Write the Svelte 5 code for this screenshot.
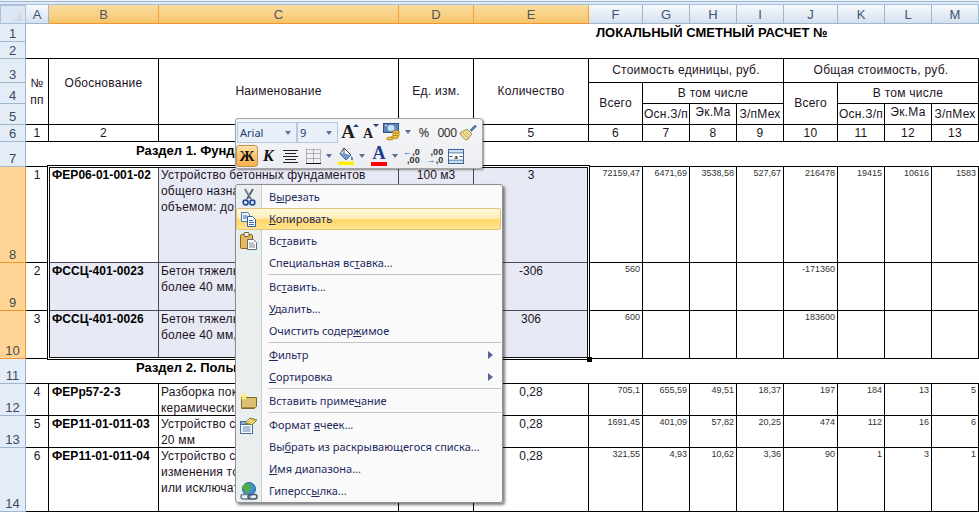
<script>
	const colW = [26, 23, 110, 240, 75, 115, 54, 47, 47, 47, 54, 47, 47, 47];
	const rowH = [5, 19, 18, 17, 24, 21, 21, 17, 25, 96, 48, 48, 25, 32, 32, 64];
	const letters = ['A', 'B', 'C', 'D', 'E', 'F', 'G', 'H', 'I', 'J', 'K', 'L', 'M'];

	// строки листа -> строка грида: лист 1 = грид 3
	const gr = (n) => n + 2;

	const head = [
		{ c: 2, r: 3, rs: 3, t: '№\nпп', k: 'mid' },
		{ c: 3, r: 3, rs: 3, t: 'Обоснование', k: 'mid up16' },
		{ c: 4, r: 3, rs: 3, t: 'Наименование', k: 'mid' },
		{ c: 5, r: 3, rs: 3, t: 'Ед. изм.', k: 'mid' },
		{ c: 6, r: 3, rs: 3, t: 'Количество', k: 'mid' },
		{ c: 7, r: 3, cs: 4, t: 'Стоимость единицы, руб.', k: 'mid' },
		{ c: 11, r: 3, cs: 4, t: 'Общая стоимость, руб.', k: 'mid' },
		{ c: 7, r: 4, rs: 2, t: 'Всего', k: 'mid' },
		{ c: 8, r: 4, cs: 3, t: 'В том числе', k: 'mid' },
		{ c: 8, r: 5, t: 'Осн.З/п', k: 'mid' },
		{ c: 9, r: 5, t: 'Эк.Ма', k: 'mid up4' },
		{ c: 10, r: 5, t: 'З/пМех', k: 'mid' },
		{ c: 11, r: 4, rs: 2, t: 'Всего', k: 'mid' },
		{ c: 12, r: 4, cs: 3, t: 'В том числе', k: 'mid' },
		{ c: 12, r: 5, t: 'Осн.З/п', k: 'mid' },
		{ c: 13, r: 5, t: 'Эк.Ма', k: 'mid up4' },
		{ c: 14, r: 5, t: 'З/пМех', k: 'mid' }
	];

	const rows = [
		{ r: 8, n: '1', code: 'ФЕР06-01-001-02', name: 'Устройство бетонных фундаментов\nобщего назначения под колонны\nобъемом: до 3 м3', unit: '100 м3', qty: '3', sel: true, active: true,
			nums: ['72159,47', '6471,69', '3538,58', '527,67', '216478', '19415', '10616', '1583'] },
		{ r: 9, n: '2', code: 'ФССЦ-401-0023', name: 'Бетон тяжелый, крупность заполнителя\nболее 40 мм, класс В7,5', unit: 'м3', qty: '-306', sel: true,
			nums: ['560', '', '', '', '-171360', '', '', ''] },
		{ r: 10, n: '3', code: 'ФССЦ-401-0026', name: 'Бетон тяжелый, крупность заполнителя\nболее 40 мм, класс В15', unit: 'м3', qty: '306', sel: true,
			nums: ['600', '', '', '', '183600', '', '', ''] },
		{ r: 12, n: '4', code: 'ФЕРр57-2-3', name: 'Разборка покрытий полов из плит\nкерамических', unit: '100 м2', qty: '0,28',
			nums: ['705,1', '655,59', '49,51', '18,37', '197', '184', '13', '5'] },
		{ r: 13, n: '5', code: 'ФЕР11-01-011-03', name: 'Устройство стяжек бетонных толщиной\n20 мм', unit: '100 м2', qty: '0,28',
			nums: ['1691,45', '401,09', '57,82', '20,25', '474', '112', '16', '6'] },
		{ r: 14, n: '6', code: 'ФЕР11-01-011-04', name: 'Устройство стяжек: на каждые 5 мм\nизменения толщины стяжки добавлять\nили исключать', unit: '100 м2', qty: '0,28',
			nums: ['321,55', '4,93', '10,62', '3,36', '90', '1', '3', '1'] }
	];

	const place = (c, r, cs = 1, rs = 1) => `grid-column:${c}/span ${cs};grid-row:${r}/span ${rs}`;

	const menu = [
		{ a: 'В', u: 'ы', b: 'резать', icon: 'cut' },
		{ a: '', u: 'К', b: 'опировать', icon: 'copy', hot: true },
		{ a: 'Вс', u: 'т', b: 'авить', icon: 'paste' },
		{ a: 'Специальная вс', u: 'т', b: 'авка...' },
		{ sep: true },
		{ a: 'Вс', u: 'т', b: 'авить...' },
		{ a: '', u: 'У', b: 'далить...' },
		{ a: 'Очистить содер', u: 'ж', b: 'имое' },
		{ sep: true },
		{ a: '', u: 'Ф', b: 'ильтр', sub: true },
		{ a: '', u: 'С', b: 'ортировка', sub: true },
		{ sep: true },
		{ a: 'Вставить приме', u: 'ч', b: 'ание', icon: 'note' },
		{ sep: true },
		{ a: 'Формат ', u: 'я', b: 'чеек...', icon: 'format' },
		{ a: 'Вы', u: 'б', b: 'рать из раскрывающегося списка...' },
		{ a: '', u: 'И', b: 'мя диапазона...' },
		{ a: 'Гиперсс', u: 'ы', b: 'лка...', icon: 'link' }
	];
</script>

<div class="page">
	<div class="sheet" style="grid-template-columns:{colW.map((w) => w + 'px').join(' ')};grid-template-rows:{rowH.map((h) => h + 'px').join(' ')}">
		<div class="band" style={place(1, 1, 14)}></div>

		<div class="corner" style={place(1, 2)}><i></i></div>
		{#each letters as l, i}
			<div class="colhead" class:on={i >= 1 && i <= 4} style={place(i + 2, 2)}>{l}</div>
		{/each}

		{#each rowH.slice(2) as _, i}
			<div class="rowhead" class:on={i >= 7 && i <= 9} style={place(1, i + 3)}>{i + 1}</div>
		{/each}

		<div class="title" style={place(2, gr(1), 13, 2)}>ЛОКАЛЬНЫЙ СМЕТНЫЙ РАСЧЕТ №</div>

		{#each head as h}
			<div class="cell {h.k}" style={place(h.c, gr(h.r), h.cs, h.rs)}>{h.t}</div>
		{/each}

		{#each Array(13) as _, i}
			<div class="cell mid" style={place(i + 2, gr(6))}>{i + 1}</div>
		{/each}

		<div class="section" style={place(2, gr(7), 13)}>Раздел 1. Фундаменты</div>
		<div class="section" style={place(2, gr(11), 13)}>Раздел 2. Полы</div>

		{#each rows as row}
			<div class="cell top center" style={place(2, gr(row.r))}>{row.n}</div>
			<div class="cell top code" class:sel={row.sel} class:active={row.active} style={place(3, gr(row.r))}>{row.code}</div>
			<div class="cell top name" class:sel={row.sel} style={place(4, gr(row.r))}>{row.name}</div>
			<div class="cell top center" class:sel={row.sel} style={place(5, gr(row.r))}>{row.unit}</div>
			<div class="cell top center" class:sel={row.sel} style={place(6, gr(row.r))}>{row.qty}</div>
			{#each row.nums as v, i}
				<div class="cell num" style={place(7 + i, gr(row.r))}>{v}</div>
			{/each}
		{/each}
	</div>

	<div class="selection"><b></b></div>

	<div class="menu">
		{#each menu as m}
			{#if m.sep}
				<div class="sep"></div>
			{:else}
				<div class="item" class:hot={m.hot}>
					<span class="ico">
						{#if m.icon === 'cut'}
							<svg width="14" height="19" viewBox="0 0 14 19">
								<path d="M3 1l6 10M11 1L5 11" stroke="#4f5c6c" stroke-width="1.8" fill="none" />
								<path d="M3.5 1l5.5 9" stroke="#cfd6de" stroke-width=".6" fill="none" />
								<circle cx="3.6" cy="14.5" r="2.5" fill="#cfe0f5" stroke="#1f3f8f" stroke-width="1.5" />
								<circle cx="10.4" cy="14.5" r="2.5" fill="#cfe0f5" stroke="#1f3f8f" stroke-width="1.5" />
							</svg>
						{:else if m.icon === 'copy'}
							<svg width="16" height="16" viewBox="0 0 16 16">
								<path d="M.5 1.5h6l2 2v7h-8z" fill="#eaf2fc" stroke="#4a78b8" />
								<path d="M6.5 5.5h5l3 3v7h-8z" fill="#fff" stroke="#2f5fa8" />
								<path d="M2 5h4M2 7h4M8 9.5h4M8 11.5h5M8 13.5h5" stroke="#3a6cb4" />
							</svg>
						{:else if m.icon === 'paste'}
							<svg width="17" height="18" viewBox="0 0 17 18">
								<rect x=".5" y="2.5" width="12" height="14" rx="1" fill="#e6b95c" stroke="#8a6420" />
								<rect x="4" y=".5" width="5" height="4" rx="1" fill="#f0efe6" stroke="#6e5a30" />
								<path d="M7.5 7.5h6l3 3v7h-9z" fill="#fff" stroke="#5e6a80" />
								<path d="M9 11h5M9 13h6M9 15h6" stroke="#7c8799" />
							</svg>
						{:else if m.icon === 'note'}
							<svg width="18" height="16" viewBox="0 0 18 16">
								<path d="M1.5 4.5h15v9l-2 2h-13z" fill="#dcc070" stroke="#7e6a2c" />
								<path d="M2.500 14.500h12" stroke="#a58b3c" />
								<path d="M4 0v7M.5 3.500h7M1.500 1l5 5M6.500 1l-5 5" stroke="#fff07a" stroke-width="1.200" />
							</svg>
						{:else if m.icon === 'format'}
							<svg width="18" height="17" viewBox="0 0 18 17">
								<rect x=".5" y="4.500" width="12" height="12" fill="#fff" stroke="#4a6d9c" />
								<path d="M.5 4.500h12v3H.5z" fill="#8fb0d8" stroke="#4a6d9c" />
								<path d="M2.500 10h8M2.500 12h8M2.500 14h8" stroke="#5d82b4" />
								<path d="M5 6l5-5 7 2-5 5z" fill="#e4b84e" stroke="#7c8a3a" />
								<path d="M7 5l3-3M9 6l3-3M11 7l3-3" stroke="#fdf3c8" />
							</svg>
						{:else if m.icon === 'link'}
							<svg width="18" height="19" viewBox="0 0 18 19">
								<circle cx="9" cy="7" r="6.500" fill="#3f8fd0" stroke="#2a6496" />
								<path d="M4 3c2-2 5-2 6 0s2 3 0 5-3 4-4 3-1-3-3-4-1-3 1-4z" fill="#4fae46" />
								<rect x="1" y="12.500" width="9" height="4.500" rx="2.200" fill="#eef2f6" stroke="#6f7d8e" stroke-width="1.500" />
								<rect x="8" y="12.500" width="9" height="4.500" rx="2.200" fill="none" stroke="#47566a" stroke-width="1.500" />
							</svg>
						{/if}
					</span>
					<span class="lbl">{m.a}<u>{m.u}</u>{m.b}</span>
					{#if m.sub}<span class="sub"></span>{/if}
				</div>
			{/if}
		{/each}
	</div>

	<div class="mini">
		<div class="mini-row">
			<div class="combo font"><span>Arial</span><i class="dd"></i></div>
			<div class="combo size"><span>9</span><i class="dd"></i></div>
			<div class="tb w20 grow"><span class="big">A</span><i class="up"></i></div>
			<div class="tb w20 grow"><span class="small">A</span><i class="down"></i></div>
			<div class="tb w26">
				<svg width="18" height="18" viewBox="0 0 18 18">
					<rect x=".5" y=".5" width="15" height="9" fill="#5f86bc" stroke="#2f4f86" />
					<ellipse cx="8" cy="5" rx="3.500" ry="3" fill="#cfe0f4" />
					<path d="M2 2.500h2M12 7.500h2" stroke="#dce8f6" />
					<ellipse cx="13" cy="9" rx="3.500" ry="1.500" fill="#f3c63c" stroke="#9a6f10" stroke-width=".7" />
					<ellipse cx="13" cy="11.500" rx="3.500" ry="1.500" fill="#f3c63c" stroke="#9a6f10" stroke-width=".7" />
					<ellipse cx="12" cy="14" rx="3.500" ry="1.500" fill="#f3c63c" stroke="#9a6f10" stroke-width=".7" />
					<ellipse cx="7" cy="15.500" rx="3.500" ry="1.500" fill="#f3c63c" stroke="#9a6f10" stroke-width=".7" />
				</svg>
			</div>
			<i class="dd solo flush"></i>
			<div class="tb w26 plain">%</div>
			<div class="tb w20 plain narrow">000</div>
			<div class="tb w22">
				<svg width="18" height="17" viewBox="0 0 18 17">
					<path d="M11 6l5-5 1.500 1.500-5 5z" fill="#5a7fb4" stroke="#3c5a88" stroke-width=".6" />
					<path d="M1 9l7-4 5 5-5 6c-2 0-6-4-7-7z" fill="#f1dd9a" stroke="#a58c4c" />
					<path d="M4 9l5 5M6.500 7.500l4 4" stroke="#c9a95a" />
				</svg>
			</div>
		</div>
		<div class="mini-row second">
			<div class="tb w22 bold">Ж</div>
			<div class="tb w21 ital">К</div>
			<div class="tb w23">
				<svg width="15" height="13" viewBox="0 0 15 13"><path d="M0 .5h15M2 3.500h11M0 6.500h15M2 9.500h11M0 12.500h15" stroke="#222" /></svg>
			</div>
			<div class="tb w22">
				<svg width="15" height="15" viewBox="0 0 15 15">
					<path d="M.5 .5h14M.5 4.500h14M.5 9.500h14M.5 .5v14M7.500 .5v14M14.500 .5v14" stroke="#777" stroke-dasharray="1 1" />
					<path d="M0 14.500h15" stroke="#111" />
				</svg>
			</div>
			<i class="dd solo m2"></i>
			<div class="tb w24">
				<svg width="16" height="18" viewBox="0 0 16 18">
					<path d="M6 1l7 7-5 5-6-6z" fill="#fff" stroke="#445" />
					<path d="M6 1v6" stroke="#445" />
					<path d="M5 6l8 2-5 5-6-6z" fill="#6f9bd0" />
					<path d="M13.500 9c1 1.500 2 3 1 4s-2-.5-1-4z" fill="#3c6db4" />
					<rect y="14.500" width="16" height="3.500" fill="#ffef00" />
				</svg>
			</div>
			<i class="dd solo m1"></i>
			<div class="tb w26 color"><span>A</span><em></em></div>
			<i class="dd solo m0"></i>
			<div class="tb w25">
				<div class="dec"><span><i class="ar">←</i>,0</span><span>,00</span></div>
			</div>
			<div class="tb w22">
				<div class="dec"><span>,00</span><span><i class="ar">→</i>,0</span></div>
			</div>
			<div class="tb w20">
				<svg width="16" height="15" viewBox="0 0 16 15">
					<rect x=".5" y=".5" width="15" height="14" fill="#cfe0f2" stroke="#3d6496" />
					<path d="M.5 4h15M.5 11h15" stroke="#3d6496" />
					<rect x="1" y="4.500" width="14" height="6" fill="#fff" />
					<path d="M1.500 7.500h3M14.500 7.500h-3" stroke="#2a4f86" />
					<text x="8" y="10" text-anchor="middle" font-size="7" font-weight="700" font-family="Liberation Serif, serif" fill="#222">a</text>
				</svg>
			</div>
		</div>
	</div>
</div>

<style>
	:global(body) {
		margin: 0;
		background: #fff;
	}

	.page {
		position: relative;
		width: 979px;
		height: 512px;
		overflow: hidden;
		font-family: "Liberation Sans", Arial, sans-serif;
		font-size: 12px;
		color: #1d1226;
	}

	.sheet {
		display: grid;
	}

	.band {
		background: linear-gradient(to bottom, #eef3f9 0, #eef3f9 1px, #9db8d4 1px, #9db8d4 2px, #dfe9f5 2px, #dfe9f5 4px, #a9c1da 4px);
	}

	.corner {
		position: relative;
		background: #dde7f4;
		border: 1px solid #a7bfdb;
		box-sizing: border-box;
	}

	.corner i {
		position: absolute;
		right: 3px;
		bottom: 2px;
		width: 13px;
		height: 12px;
		background: linear-gradient(135deg, #fff, #c3d2e4);
		clip-path: polygon(100% 0, 100% 100%, 0 100%);
	}

	.colhead {
		display: flex;
		align-items: center;
		justify-content: center;
		background: linear-gradient(to bottom, #f6f9fc, #e3ebf5 60%, #d6e1ee);
		border-right: 1px solid #9eb6ce;
		border-bottom: 1px solid #9eb6ce;
		box-sizing: border-box;
		color: #3d5470;
		font-size: 13px;
	}

	.colhead.on {
		background: linear-gradient(to bottom, #f9dc9f, #f8d083 60%, #f6c46a);
		border-right-color: #f2a33c;
		border-bottom: 1px solid #f29536;
		color: #50555e;
	}

	.rowhead {
		display: flex;
		align-items: flex-end;
		justify-content: center;
		background: #e4ecf7;
		border-right: 1px solid #9eb6ce;
		border-bottom: 1px solid #9eb6ce;
		box-sizing: border-box;
		color: #3a4a5e;
		font-size: 13px;
		line-height: 15px;
	}

	.rowhead.on {
		background: #ffd595;
		border-right-color: #f29536;
		border-bottom-color: #f29536;
		color: #4a4a48;
	}

	.cell {
		box-sizing: border-box;
		border-right: 1px solid #000;
		border-bottom: 1px solid #000;
		white-space: pre-line;
		overflow: hidden;
	}

	.mid {
		display: flex;
		align-items: center;
		justify-content: center;
		text-align: center;
		line-height: 17px;
		letter-spacing: .25px;
	}

	.up16 {
		padding-bottom: 16px;
	}

	.up4 {
		padding-bottom: 4px;
	}

	.top {
		line-height: 16px;
	}

	.center {
		text-align: center;
	}

	.code {
		padding-left: 3px;
		font-weight: 700;
		color: #000;
		letter-spacing: .05px;
	}

	.name {
		padding-left: 2px;
		letter-spacing: .2px;
	}

	.sel {
		background: #e7eaf4;
		border-color: #454a55;
	}

	.active {
		background: #fff;
	}

	.num {
		padding: 0 2px 0 0;
		text-align: right;
		font-size: 9px;
		line-height: 12px;
		color: #333;
	}

	.title {
		padding: 1px 0 0 570px;
		border-bottom: 1px solid #000;
		box-sizing: border-box;
		font-size: 13px;
		font-weight: 700;
		line-height: 15px;
		color: #000;
	}

	.section {
		padding: 1px 0 0 110px;
		border-bottom: 1px solid #000;
		box-sizing: border-box;
		font-size: 13px;
		font-weight: 700;
		line-height: 16px;
		color: #000;
	}

	.selection {
		position: absolute;
		left: 47px;
		top: 165px;
		width: 543px;
		height: 195px;
		box-sizing: border-box;
		border: 1px solid #000;
		box-shadow: inset 0 0 0 1px #fff, inset 0 0 0 2px #111;
		pointer-events: none;
	}

	.selection b {
		position: absolute;
		right: -3px;
		bottom: -3px;
		width: 5px;
		height: 5px;
		background: #000;
	}

	.menu {
		position: absolute;
		left: 235px;
		top: 184px;
		width: 268px;
		box-sizing: border-box;
		padding: 1px 0 0;
		border: 1px solid #8e8e8e;
		border-radius: 3px;
		background: linear-gradient(to right, #e9eeee 25px, #c8cdcd 25px, #c8cdcd 26px, #fafafa 26px);
		box-shadow: 2px 2px 3px rgba(0, 0, 0, .5);
		font-family: "Noto Sans", Tahoma, sans-serif;
		font-size: 11px;
		color: #1d2a5c;
	}

	.item {
		position: relative;
		display: flex;
		align-items: center;
		box-sizing: border-box;
		height: 22px;
	}

	.item.hot {
		background: linear-gradient(to bottom, #fff8dc, #ffeeb8 45%, #ffd76a 55%, #ffe48f);
		border: 1px solid #e2c27c;
		border-radius: 2px;
		margin-right: 1px;
	}

	.ico {
		display: flex;
		align-items: center;
		justify-content: center;
		flex: 0 0 25px;
	}

	.hot .ico {
		flex-basis: 23px;
		margin-right: 1px;
	}

	.lbl {
		margin-left: 8px;
		margin-bottom: 2px;
	}

	.lbl u {
		text-underline-offset: 1px;
	}

	.sub {
		position: absolute;
		right: 9px;
		top: 7px;
		border-left: 5px solid #56649a;
		border-top: 4px solid transparent;
		border-bottom: 4px solid transparent;
	}

	.sep {
		height: 2px;
		margin: 0 1px 0 32px;
		border-top: 1px solid #c5c5c5;
		box-sizing: border-box;
	}

	.mini {
		position: absolute;
		left: 235px;
		top: 118px;
		width: 248px;
		height: 51px;
		box-sizing: border-box;
		border: 1px solid #a3a3a3;
		border-radius: 3px;
		background: linear-gradient(to bottom, #f5f6f8, #eceef1);
		box-shadow: 1px 1px 2px rgba(0, 0, 0, .45);
		font-family: "Noto Sans", Tahoma, sans-serif;
	}

	.mini-row {
		display: flex;
		align-items: center;
		height: 24px;
		padding-left: 1px;
		margin-top: 1px;
	}

	.mini-row.second {
		margin-top: 0;
		height: 24px;
		padding-left: 0;
	}

	.combo {
		position: relative;
		display: flex;
		flex: none;
		align-items: center;
		box-sizing: border-box;
		height: 21px;
		padding-left: 2px;
		background: #e9f0fa;
		border: 1px solid #b4c8e2;
		font-size: 11px;
		color: #223c6a;
	}

	.combo.font {
		width: 60px;
	}

	.combo.size {
		width: 41px;
		margin-right: 1px;
	}

	.dd {
		display: block;
		width: 0;
		height: 0;
		border-left: 3.5px solid transparent;
		border-right: 3.5px solid transparent;
		border-top: 4px solid #5a7094;
	}

	.combo .dd {
		position: absolute;
		right: 5px;
		top: 8px;
	}

	.dd.solo {
		flex: none;
	}

	.flush { margin: 0; }
	.m2 { margin: 0 2px; }
	.m1 { margin: 0 1px; }
	.m0 { margin: 0 1px 0 0; }

	.tb {
		position: relative;
		display: flex;
		flex: none;
		align-items: center;
		justify-content: center;
		box-sizing: border-box;
		height: 22px;
		color: #222;
	}

	.w20 { width: 20px; }
	.w21 { width: 21px; }
	.w22 { width: 22px; }
	.w23 { width: 23px; }
	.w24 { width: 24px; }
	.w25 { width: 25px; }
	.w26 { width: 26px; }

	.big,
	.small,
	.bold,
	.ital,
	.color span {
		font-family: "Liberation Serif", serif;
		font-weight: 700;
		color: #1b1b1b;
	}

	.big { font-size: 19px; line-height: 18px; margin-right: 2px; }
	.small { font-size: 14px; line-height: 14px; margin-top: 3px; margin-right: 2px; }

	.up,
	.down {
		position: absolute;
		right: 0;
		top: 3px;
		width: 0;
		height: 0;
		border-left: 3px solid transparent;
		border-right: 3px solid transparent;
	}

	.up { border-bottom: 3px solid #1f3f80; }
	.down { border-top: 3px solid #1f3f80; }

	.plain {
		font-size: 13px;
		color: #333;
	}

	.narrow {
		font-size: 12px;
		letter-spacing: -.5px;
	}

	.bold {
		background: linear-gradient(to bottom, #fde3ac, #fbc26b 55%, #f8b04f);
		border: 1px solid #c2934f;
		border-radius: 3px;
		font-size: 15px;
		color: #111;
	}

	.ital {
		font-size: 16px;
		font-style: italic;
		color: #111;
	}

	.color {
		flex-direction: column;
	}

	.color span {
		font-size: 18px;
		line-height: 15px;
		color: #1f3a8a;
	}

	.color em {
		display: block;
		width: 16px;
		height: 4px;
		background: #f00;
		margin-top: 1px;
	}

	.dec {
		display: flex;
		flex-direction: column;
		align-items: flex-end;
		font-family: "Liberation Sans", sans-serif;
		font-size: 9px;
		font-weight: 700;
		line-height: 8px;
		color: #333;
		letter-spacing: .2px;
	}

	.ar {
		font-style: normal;
		color: #2f6fc4;
	}
</style>
